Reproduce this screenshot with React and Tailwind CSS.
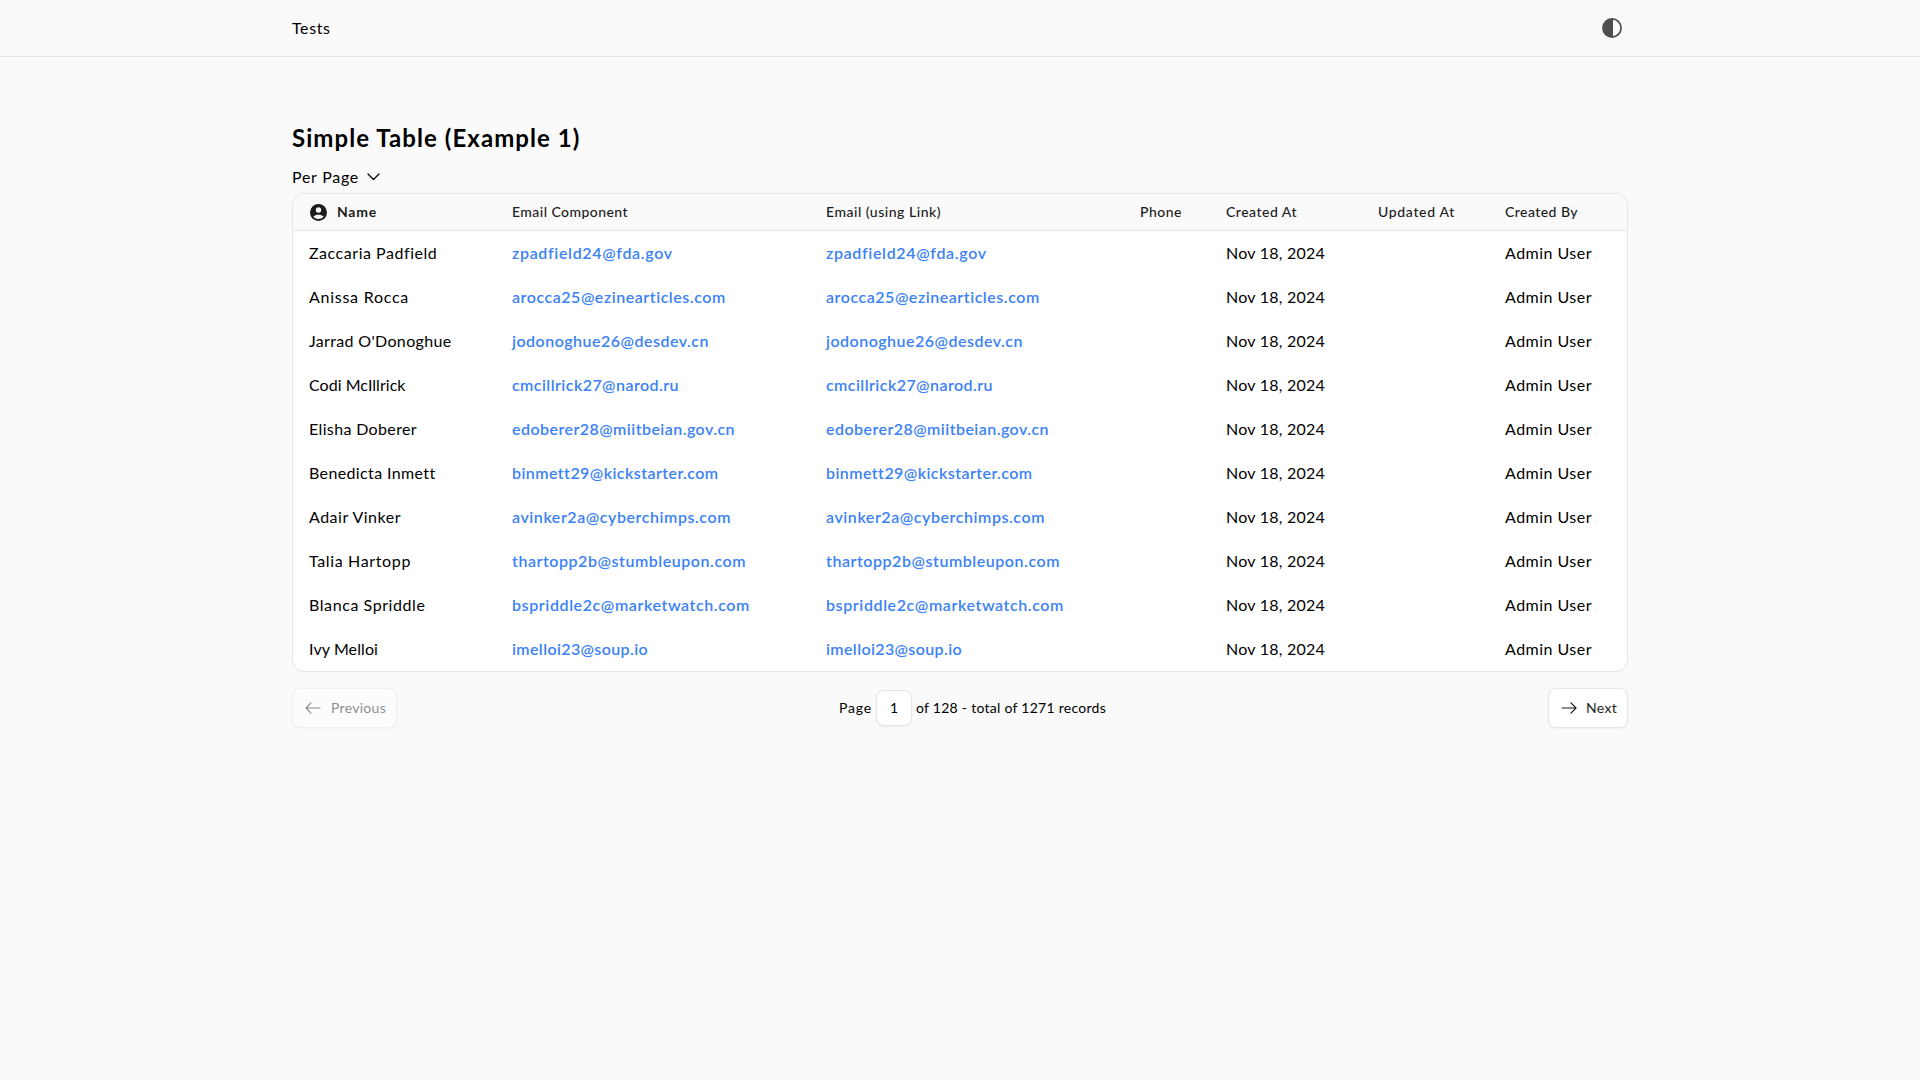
import { useLayoutEffect, useRef, useState } from "react";

const people = [
  ["Zaccaria Padfield", 128, "zpadfield24@fda.gov", 160.5],
  ["Anissa Rocca", 100, "arocca25@ezinearticles.com", 214],
  ["Jarrad O'Donoghue", 142.5, "jodonoghue26@desdev.cn", 197],
  ["Codi McIllrick", 96.5, "cmcillrick27@narod.ru", 167],
  ["Elisha Doberer", 108, "edoberer28@miitbeian.gov.cn", 223],
  ["Benedicta Inmett", 126, "binmett29@kickstarter.com", 206],
  ["Adair Vinker", 92, "avinker2a@cyberchimps.com", 219],
  ["Talia Hartopp", 102, "thartopp2b@stumbleupon.com", 234],
  ["Blanca Spriddle", 116.5, "bspriddle2c@marketwatch.com", 238],
  ["Ivy Melloi", 69, "imelloi23@soup.io", 136],
];

const columns = "grid grid-cols-[203px_314px_314px_86px_153px_126px_138px]";

/* Spreads the letters evenly so that the text fills the given width. */
function Fit({ w, children, className = "" }) {
  const ref = useRef(null);
  const [spacing, setSpacing] = useState(0);
  useLayoutEffect(() => {
    const natural = ref.current.getBoundingClientRect().width;
    setSpacing((w - natural) / children.length);
  }, [w, children]);
  return (
    <span ref={ref} className={`inline-block whitespace-pre ${className}`} style={{ letterSpacing: `${spacing}px` }}>
      {children}
    </span>
  );
}

function ArrowLeft() {
  return (
    <svg className="size-4" viewBox="0 0 16 16" fill="none" stroke="currentColor" strokeWidth="1.1" strokeLinecap="round" strokeLinejoin="round">
      <path d="M15 8H1M6 2.8 1 8l5 5.2" />
    </svg>
  );
}

function ArrowRight() {
  return (
    <svg className="size-4" viewBox="0 0 16 16" fill="none" stroke="currentColor" strokeWidth="1.2" strokeLinecap="round" strokeLinejoin="round">
      <path d="M1 8h14M10 2.8 15 8l-5 5.2" />
    </svg>
  );
}

export default function App() {
  return (
    <div className="min-h-screen bg-[#fafafa] font-['Lato','Noto_Sans',sans-serif] text-base font-normal text-black">
      <header className="h-[57px] border-b border-[#e4e4e4]">
        <div className="mx-auto flex h-14 w-[1336px] items-center justify-between pr-[6px]">
          <Fit w={38.5}>Tests</Fit>
          <svg className="size-5 text-[#4f4f4f]" viewBox="0 0 20 20">
            <circle cx="10" cy="10" r="9.1" fill="none" stroke="currentColor" strokeWidth="1.7" />
            <path d="M11 1v18h-1a9 9 0 0 1 0-18Z" fill="currentColor" />
          </svg>
        </div>
      </header>

      <main className="mx-auto w-[1336px] pt-[65px]">
        <h1 className="h-8 text-2xl leading-8 font-bold">
          <Fit w={288.5}>Simple Table (Example 1)</Fit>
        </h1>
        <button className="mt-[11px] flex h-6 items-center gap-2 leading-6">
          <Fit w={67}>Per Page</Fit>
          <svg className="h-2 w-[13px]" viewBox="0 0 13 8" fill="none" stroke="currentColor" strokeWidth="1.3" strokeLinecap="round" strokeLinejoin="round">
            <path d="m1 1 5.5 5.5L12 1" />
          </svg>
        </button>

        <section className="mt-1 overflow-hidden rounded-xl border border-[#e4e4e4] bg-white">
          <div className={`${columns} h-[37px] items-center border-b border-[#e4e4e4] bg-[#fafafa] text-sm font-medium text-[#1c1c1c]`}>
            <div className="flex items-center gap-[10px] pl-[17px] font-bold">
              <svg className="size-[17px]" viewBox="0 0 17 17">
                <circle cx="8.5" cy="8.5" r="8.5" fill="currentColor" />
                <circle cx="8.5" cy="6" r="2.7" fill="#fafafa" />
                <path d="M3.3 12.7c2.9-2.6 7.5-2.6 10.4 0a6.8 6.8 0 0 1-10.4 0Z" fill="#fafafa" />
              </svg>
              <Fit w={40}>Name</Fit>
            </div>
            <div className="pl-4"><Fit w={116}>Email Component</Fit></div>
            <div className="pl-4"><Fit w={115}>Email (using Link)</Fit></div>
            <div className="pl-4"><Fit w={42}>Phone</Fit></div>
            <div className="pl-4"><Fit w={71}>Created At</Fit></div>
            <div className="pl-[15px]"><Fit w={77}>Updated At</Fit></div>
            <div className="pl-4"><Fit w={73}>Created By</Fit></div>
          </div>
          {people.map(([name, nameWidth, email, emailWidth]) => (
            <div key={email} className={`${columns} h-11 items-center`}>
              <div className="pl-4"><Fit w={nameWidth}>{name}</Fit></div>
              <div className="pl-4 font-semibold text-[#3b82f6]"><Fit w={emailWidth}>{email}</Fit></div>
              <div className="pl-4 font-semibold text-[#3b82f6]"><Fit w={emailWidth}>{email}</Fit></div>
              <div />
              <div className="pl-4"><Fit w={99}>Nov 18, 2024</Fit></div>
              <div />
              <div className="pl-4"><Fit w={87}>Admin User</Fit></div>
            </div>
          ))}
        </section>

        <nav className="mt-4 flex h-10 items-center justify-between text-sm">
          <button className="flex h-10 w-[105px] items-center gap-[10px] rounded-lg border border-[#e4e4e4] bg-white pl-3 text-[#1c1c1c] opacity-50 shadow-xs">
            <ArrowLeft />
            <Fit w={55}>Previous</Fit>
          </button>
          <div className="flex items-center">
            <Fit w={33}>Page</Fit>
            <span className="mr-[4px] ml-[4px] flex h-9 w-9 items-center justify-center rounded-lg border border-[#e4e4e4] bg-white shadow-xs">1</span>
            <Fit w={190}>of 128 - total of 1271 records</Fit>
          </div>
          <button className="flex h-10 w-20 items-center gap-[9px] rounded-lg border border-[#e4e4e4] bg-white pl-3 text-[#1c1c1c] shadow-xs">
            <ArrowRight />
            <Fit w={31}>Next</Fit>
          </button>
        </nav>
      </main>
    </div>
  );
}
